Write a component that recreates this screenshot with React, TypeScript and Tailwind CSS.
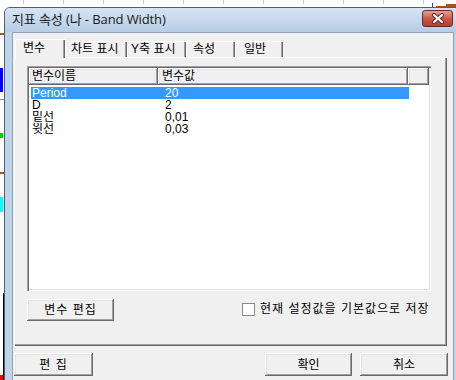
import React from 'react';

const ui = { fontFamily: '"Liberation Sans", "Noto Sans CJK KR", sans-serif' };
const title = { fontFamily: '"Open Sans", "Noto Sans CJK KR", sans-serif' };

const raised =
  'bg-[#f0f0f0] shadow-[inset_-1px_-1px_#696969,inset_1px_1px_#ffffff,inset_-2px_-2px_#a0a0a0,inset_2px_2px_#e3e3e3]';

const Btn: React.FC<{ className?: string; children: React.ReactNode }> = ({ className = '', children }) => (
  <div className={`${raised} flex items-center justify-center text-[12px] text-black ${className}`}>{children}</div>
);

const tabs = [
  { label: '차트 표시', w: 'w-[62px]', pl: 'pl-[5px]' },
  { label: 'Y축 표시', w: 'w-[59px]', pl: 'pl-[3px]' },
  { label: '속성', w: 'w-[49px]', pl: 'pl-[6px]' },
  { label: '일반', w: 'w-[48px]', pl: 'pl-[8px]' },
];

const rows = [
  { name: 'Period', value: '20', selected: true },
  { name: 'D', value: '2' },
  { name: '밑선', value: '0,01' },
  { name: '윗선', value: '0,03' },
];

export default function App() {
  return (
    <div className="relative w-[456px] h-[380px] overflow-hidden bg-white" style={ui}>
      {/* chart behind the dialog */}
      {[23, 63, 103, 143, 183, 223, 263, 303, 343, 383, 423].map((x) => (
        <div key={x} className="absolute top-0 w-px h-[4px] bg-[#c8c8c8]" style={{ left: x }} />
      ))}
      <div className="absolute left-[432px] top-[3px] w-px h-[5px] bg-[#2040ff]" />
      <div className="absolute left-[436px] top-[6px] w-[20px] h-[2px] bg-[#a0522d]" />
      <div className="absolute left-[446px] top-[4px] w-[10px] h-[2px] bg-[#a0522d]" />
      <div className="absolute left-0 top-[33px] w-[4px] h-[2px] bg-[#a0522d]" />
      <div className="absolute left-0 top-[68px] w-[3px] h-[24px] bg-[#0000ff]" />
      <div className="absolute left-0 top-[99px] w-[4px] h-[1px] bg-[#909090]" />
      <div className="absolute left-0 top-[133px] w-[3px] h-[5px] bg-[#00d000]" />
      <div className="absolute left-0 top-[172px] w-[4px] h-[2px] bg-[#a0522d]" />
      <div className="absolute left-0 top-[197px] w-[3px] h-[15px] bg-[#00ffff]" />
      <div className="absolute left-[3px] top-[293px] w-px h-[87px] bg-black" />
      <div className="absolute left-0 top-[375px] w-[3px] h-[5px] bg-[#ff0000]" />

      {/* dialog window */}
      <div className="absolute left-[4px] top-[7px] w-[458px] h-[390px] rounded-t-[6px] border border-[#4f6073] bg-[#bfd4ea] flex flex-col">
        <div className="h-[24px] shrink-0 rounded-t-[5px] bg-gradient-to-b from-[#d6e4f2] to-[#b6cde6] flex items-center pl-[7px] pr-[8px]">
          <span className="text-[13px] text-[#1a1a1a] tracking-[-0.1px]" style={title}>
            지표 속성 (나 - Band Width)
          </span>
          <div className="ml-auto w-[31px] h-[17px] mt-[-4px] rounded-[3px] border border-[#6e2a22] bg-gradient-to-b from-[#e4a092] via-[#c95a4b] to-[#b33d2f] flex items-center justify-center">
            <svg width="14" height="11" viewBox="0 0 14 11">
              <path d="M3 2 L11 9 M11 2 L3 9" stroke="#5a2a26" strokeWidth="4" strokeLinecap="round" />
              <path d="M3 2 L11 9 M11 2 L3 9" stroke="#ffffff" strokeWidth="2.2" strokeLinecap="round" />
            </svg>
          </div>
        </div>

        <div className="flex-1 px-[7px]">
          <div className="h-full border-t border-x border-[#8fa3b8] bg-[#f0f0f0] flex flex-col">
            {/* tab strip */}
            <div className="mt-[6px] ml-[2px] h-[18px] flex items-end">
              <div className="relative z-10 w-[50px] h-[19px] mb-[-1px] bg-[#f0f0f0] rounded-tl-[2px] border-l border-t border-white shadow-[inset_-1px_0_#696969,inset_-2px_0_#a0a0a0] pl-[7px] pt-[1px] text-[12px] leading-[15px]">
                변수
              </div>
              {tabs.map((t) => (
                <div
                  key={t.label}
                  className={`${t.w} ${t.pl} h-[16px] bg-[#f0f0f0] rounded-tl-[2px] border-l border-t border-white shadow-[inset_-1px_0_#696969,inset_-2px_0_#a0a0a0] text-[12px] leading-[15px] whitespace-nowrap`}
                >
                  {t.label}
                </div>
              ))}
            </div>

            {/* tab panel */}
            <div className="ml-[1px] w-[433px] h-[289px] border-l border-t border-white shadow-[inset_-1px_-1px_#696969,inset_-2px_-2px_#a0a0a0] flex flex-col pl-[12px] pt-[8px]">
              <div className="w-[404px] h-[225px] bg-white shadow-[inset_1px_1px_#a0a0a0,inset_2px_2px_#696969,inset_-1px_-1px_#ffffff,inset_-2px_-2px_#e3e3e3] p-[2px] flex flex-col">
                <div className="h-[17px] flex text-[12px] leading-[15px]">
                  <div className={`${raised} w-[129px] pl-[3px] pt-[1px]`}>변수이름</div>
                  <div className={`${raised} w-[250px] pl-[4px] pt-[1px]`}>변수값</div>
                  <div className={`${raised} flex-1`} />
                </div>
                <div className="pt-[2px] pl-[2px] flex flex-col">
                  {rows.map((r) => (
                    <div
                      key={r.name}
                      className={`w-[378px] h-[12px] flex items-center overflow-hidden text-[12px] leading-[12px] ${
                        r.selected ? 'bg-[#3399ff] text-white' : 'text-black'
                      }`}
                    >
                      <span className="w-[134px] pl-[1px]">{r.name}</span>
                      <span>{r.value}</span>
                    </div>
                  ))}
                </div>
              </div>

              <div className="mt-[8px] flex items-center">
                <Btn className="w-[87px] h-[22px] tracking-[1px]">변수 편집</Btn>
                <div className="ml-[128px] w-[13px] h-[13px] bg-white border border-[#8a8a8a] mt-[-2px]" />
                <span className="ml-[5px] text-[12px] mt-[-2px] whitespace-nowrap tracking-[1px]">
                  현재 설정값을 기본값으로 저장
                </span>
              </div>
            </div>

            {/* bottom buttons */}
            <div className="mt-[7px] flex">
              <Btn className="ml-[1px] w-[79px] h-[23px] tracking-[1px]">편 집</Btn>
              <Btn className="ml-[172px] w-[87px] h-[23px]">확인</Btn>
              <Btn className="ml-[8px] w-[88px] h-[23px]">취소</Btn>
            </div>
          </div>
        </div>
      </div>
    </div>
  );
}
